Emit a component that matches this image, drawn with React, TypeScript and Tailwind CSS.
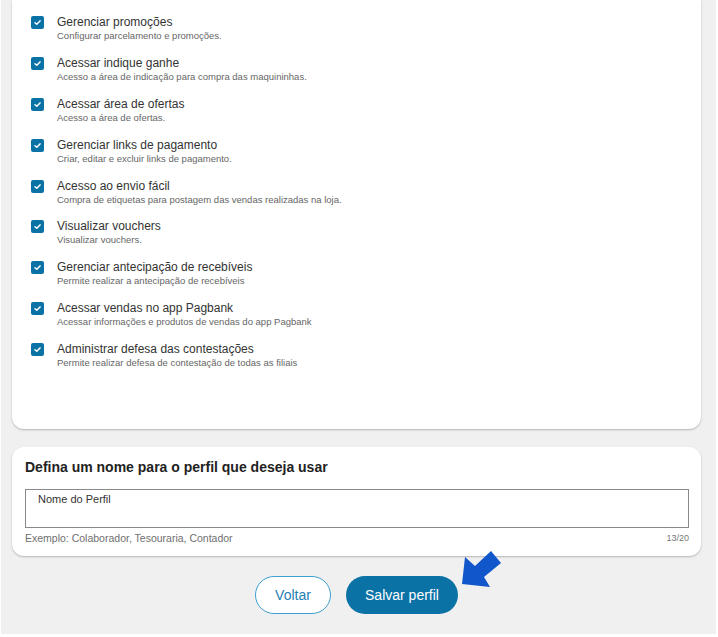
import React from 'react';

type Permission = { title: string; description: string };

const permissions: Permission[] = [
  { title: 'Gerenciar promoções', description: 'Configurar parcelamento e promoções.' },
  { title: 'Acessar indique ganhe', description: 'Acesso a área de indicação para compra das maquininhas.' },
  { title: 'Acessar área de ofertas', description: 'Acesso a área de ofertas.' },
  { title: 'Gerenciar links de pagamento', description: 'Criar, editar e excluir links de pagamento.' },
  { title: 'Acesso ao envio fácil', description: 'Compra de etiquetas para postagem das vendas realizadas na loja.' },
  { title: 'Visualizar vouchers', description: 'Visualizar vouchers.' },
  { title: 'Gerenciar antecipação de recebíveis', description: 'Permite realizar a antecipação de recebíveis' },
  { title: 'Acessar vendas no app Pagbank', description: 'Acessar informações e produtos de vendas do app Pagbank' },
  { title: 'Administrar defesa das contestações', description: 'Permite realizar defesa de contestação de todas as filiais' },
];

function CheckBox() {
  return (
    <span className="mt-px flex h-[13px] w-[13px] shrink-0 items-center justify-center rounded-[2px] bg-[#0b72a6]">
      <svg width="9" height="9" viewBox="0 0 10 10" fill="none">
        <path d="M2.2 5.2 L4.2 7 L7.8 3.2" stroke="white" strokeWidth="1.6" strokeLinecap="round" strokeLinejoin="round" />
      </svg>
    </span>
  );
}

export default function App() {
  return (
    <div className="h-[637px] w-[718px] bg-white pb-[3px] pl-px pr-[2px]" style={{ fontFamily: '"Liberation Sans", Arial, sans-serif' }}>
      <div className="h-[634px] overflow-hidden bg-[#f0f0f0] pl-[11px] pr-[15px]">
        <div className="rounded-b-xl bg-white pb-[60px] pl-[19px] pt-[15px] shadow-[0_1px_2px_rgba(0,0,0,0.25)]">
          <div className="flex flex-col gap-[13.88px]">
            {permissions.map((p) => (
              <label key={p.title} className="flex items-start gap-[13px]">
                <CheckBox />
                <div className="flex flex-col">
                  <span className="text-[12px] leading-[14px] text-[#333333]">{p.title}</span>
                  <span className="text-[9.5px] leading-[13px] text-[#666666]">{p.description}</span>
                </div>
              </label>
            ))}
          </div>
        </div>

        <div className="mt-[18px] rounded-xl bg-white pb-[11px] pl-[13px] pr-[12px] pt-[10px] shadow-[0_1px_2px_rgba(0,0,0,0.25)]">
          <h2 className="text-[14px] font-bold leading-[20px] text-[#222222]">
            Defina um nome para o perfil que deseja usar
          </h2>
          <div className="mt-[12px] h-[39px] border border-[#8a8a8a] px-[12px] pt-[2px]">
            <span className="block text-[11px] leading-[14px] text-[#333333]">Nome do Perfil</span>
          </div>
          <div className="mt-[3px] flex items-center justify-between">
            <span className="text-[10.5px] leading-[14px] text-[#6f6f6f]">Exemplo: Colaborador, Tesouraria, Contador</span>
            <span className="text-[9px] leading-[14px] text-[#777777]">13/20</span>
          </div>
        </div>

        <div className="relative mt-[20px] flex justify-center gap-[15px]">
          <button className="h-[38px] w-[76px] rounded-full border border-[#3f9fd0] bg-white text-[14px] text-[#1f7fb3]">
            Voltar
          </button>
          <button className="h-[38px] w-[112px] rounded-full bg-[#0b72a6] text-[14px] text-white">
            Salvar perfil
          </button>
          <svg className="absolute left-[449px] top-[-25px]" width="42" height="42" viewBox="0 0 42 42">
            <polygon points="1,33 4,6 14,15 30,0 40,12 23,26 29,36" fill="#1156cb" />
          </svg>
        </div>
      </div>
    </div>
  );
}
